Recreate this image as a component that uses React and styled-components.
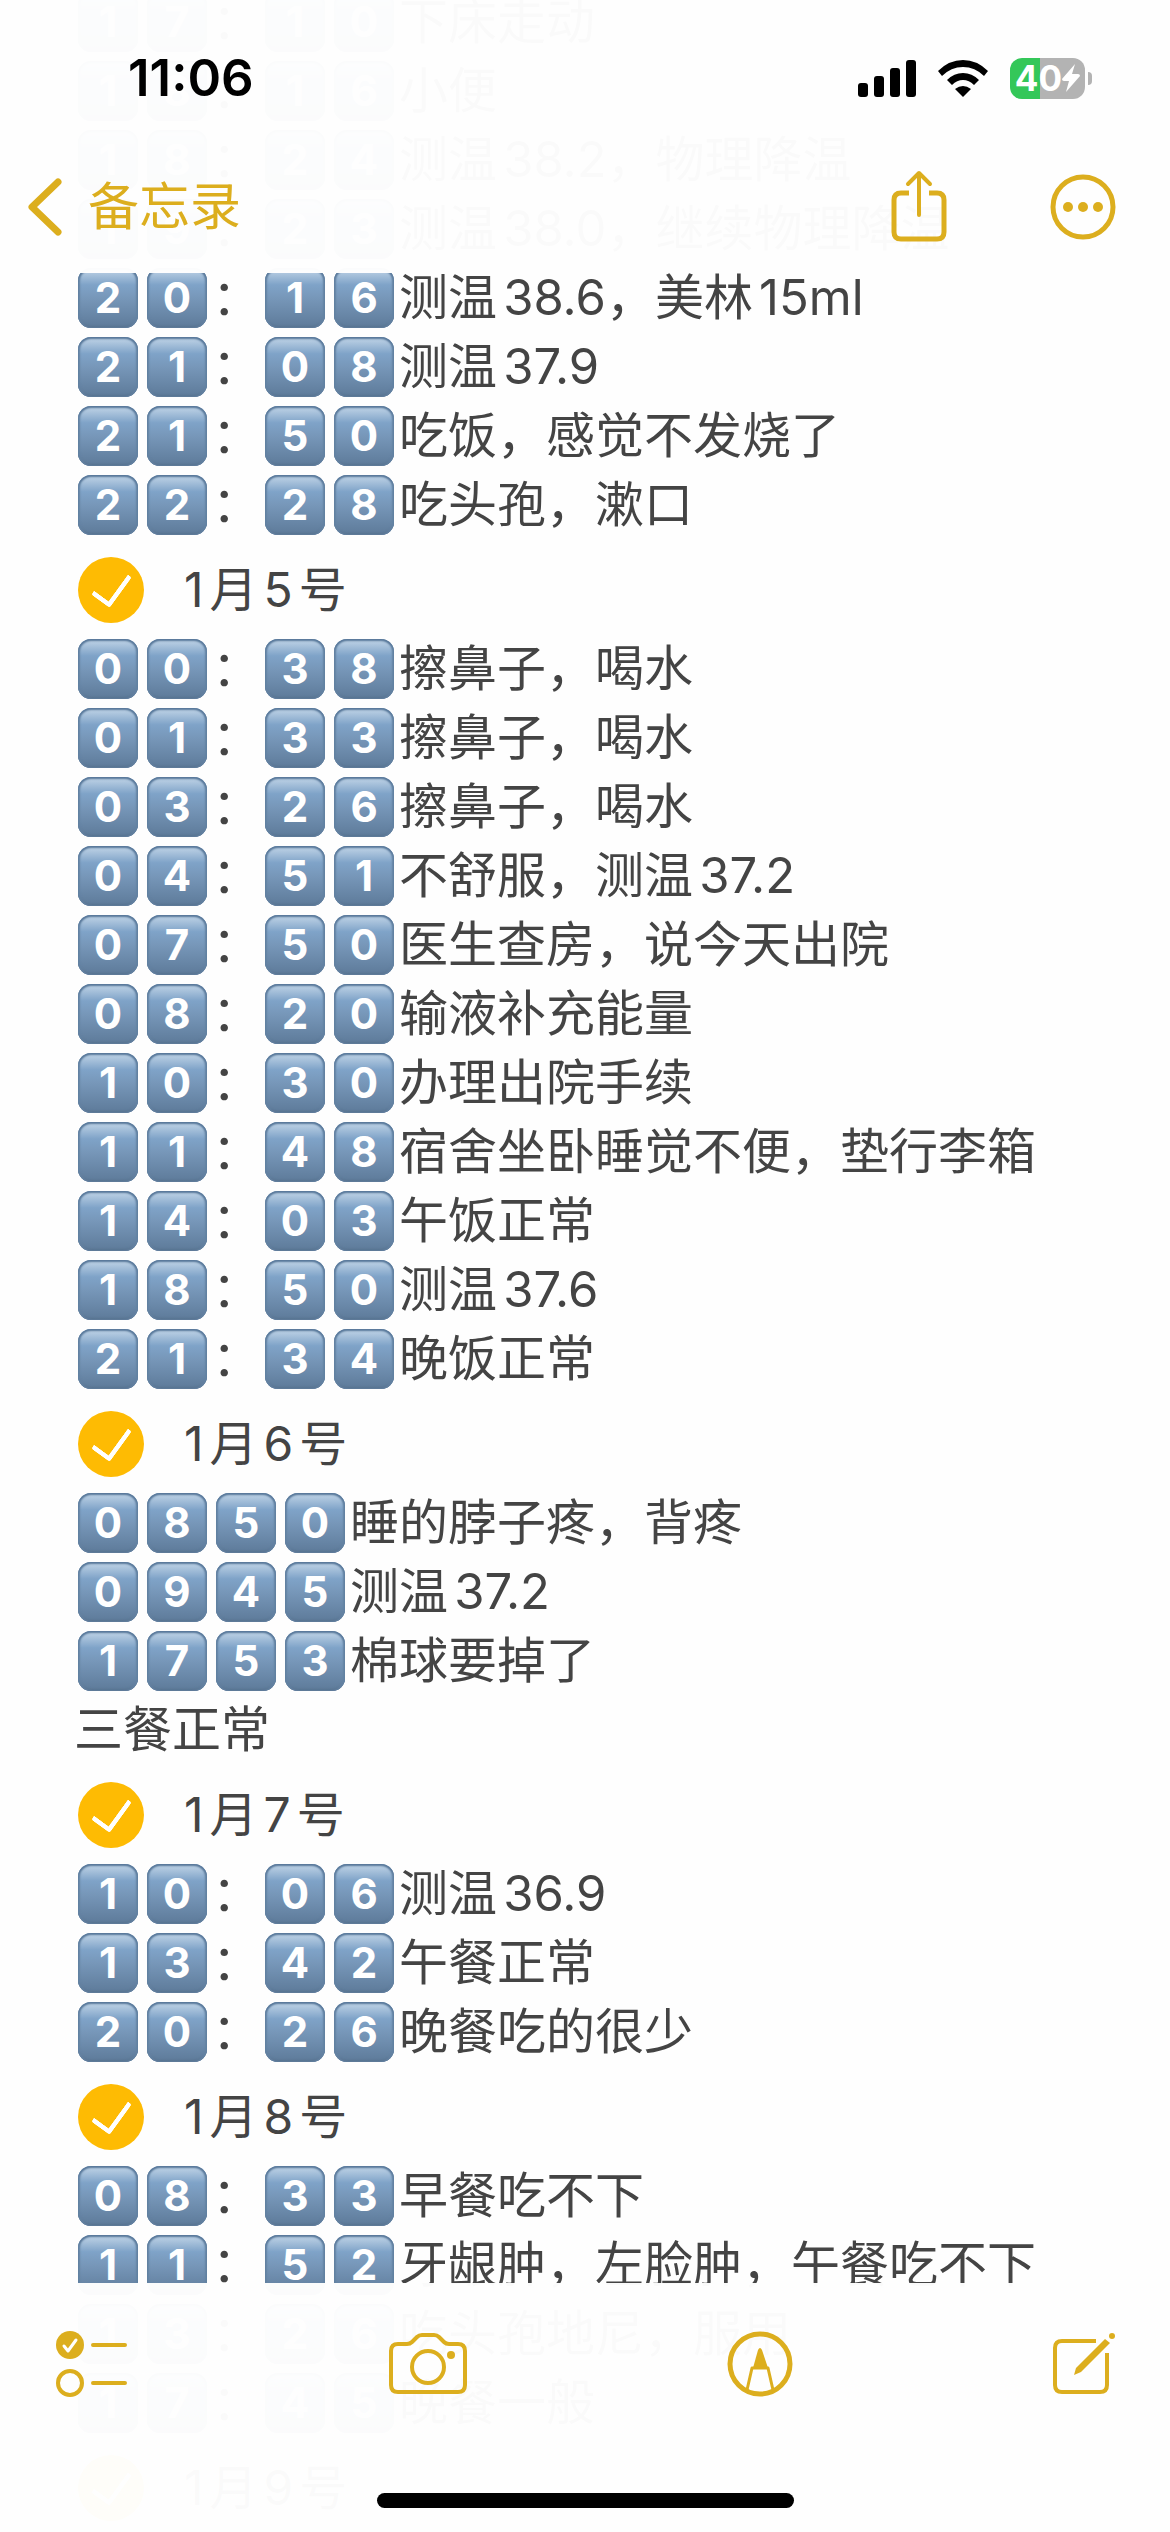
import React from 'react';
import styled, { createGlobalStyle } from 'styled-components';

const Global = createGlobalStyle`
  * { box-sizing: border-box; }
  body {
    margin: 0;
    background: #fefefe;
    color: #444444;
    font-family: Inter, "Noto Sans CJK SC", sans-serif;
  }
`;

const Screen = styled.div`
  position: relative;
  height: 100vh;
  overflow: hidden;
`;

const bar = `
  position: absolute;
  left: 0;
  right: 0;
  background: rgba(254, 254, 254, 0.98);
`;

const Header = styled.header`
  ${bar}
  top: 0;
  height: 273px;
`;

const StatusBar = styled.div`
  display: flex;
  justify-content: space-between;
  align-items: center;
  height: 114px;
  padding: 42px 78px 0 128px;
  color: #000;
`;

const Clock = styled.time`
  font-size: 51px;
  line-height: 60px;
  font-weight: 600;
`;

const StatusIcons = styled.div`
  display: flex;
  align-items: center;
  gap: 22px;
`;

const Battery = styled.div`
  display: flex;
  align-items: center;
  gap: 3px;

  &::after {
    content: '';
    width: 4px;
    height: 13px;
    border-radius: 0 4px 4px 0;
    background: #b3b3b3;
  }
`;

const BatteryBody = styled.div`
  display: flex;
  align-items: center;
  justify-content: center;
  width: 75px;
  height: 41px;
  border-radius: 12px;
  background: linear-gradient(90deg, #34c759 40%, #b3b3b3 40%);
  color: #fff;
  font-size: 35px;
  line-height: 41px;
  font-weight: 700;
`;

const NavBar = styled.nav`
  display: flex;
  align-items: center;
  gap: 102px;
  height: 159px;
  padding: 27px 54px 0 28px;
`;

const BackLink = styled.a`
  display: flex;
  align-items: center;
  gap: 26px;
  margin-right: auto;
  color: #dcae1e;
  font-size: 51px;
  line-height: 70px;
  text-decoration: none;
`;

const IconButton = styled.button`
  display: flex;
  padding: 0;
  border: 0;
  background: none;
  color: #dcae1e;
`;

const Note = styled.main`
  margin-top: -13px;
  padding: 0 60px 0 74px;
  font-size: 49px;
  line-height: 69px;
  text-autospace: normal;
`;

const Line = styled.p`
  display: flex;
  align-items: center;
  height: 69px;
  margin: 0;
  white-space: nowrap;
`;

const Keycap = styled.span`
  flex: none;
  width: 60px;
  height: 60px;
  margin: 0 5px 0 4px;
  border-radius: 13px;
  background: linear-gradient(#c3d6e8 0, #7fa3c8 28%, #7797b9 50%, #5d7a99 100%);
  box-shadow: inset 0 2px 2px #58789a, inset 2px 0 2px #6685a5, inset -2px 0 2px #6685a5,
    inset 0 -2px 2px #58728f;
  color: #fff;
  font-size: 42px;
  line-height: 60px;
  font-weight: 700;
  text-align: center;
`;

const DayLabel = styled.label`
  display: flex;
  align-items: center;
  gap: 40px;
  padding: 18px 0 11px 4px;
  font-size: 48px;
  line-height: 66px;
`;

const DayCheck = styled.input`
  appearance: none;
  flex: none;
  width: 66px;
  height: 66px;
  margin: 0;
  border-radius: 50%;
  background: #febb03;

  &:checked {
    display: grid;
    place-items: center;
  }

  &:checked::after {
    content: '';
    width: 18px;
    height: 33px;
    margin-bottom: 8px;
    border: solid #fff;
    border-width: 0 5px 5px 0;
    border-radius: 3px;
    transform: rotate(36deg);
  }
`;

const Footer = styled.footer`
  ${bar}
  bottom: 0;
  height: 249px;
`;

const Toolbar = styled.div`
  display: flex;
  justify-content: space-between;
  align-items: center;
  height: 166px;
  padding: 0 54px 4px 55px;
`;

const HomeIndicator = styled.div`
  width: 417px;
  height: 15px;
  margin: 44px auto 0;
  border-radius: 8px;
  background: #000;
`;

const days = [
  {
    lines: [
      ['17:10', '下床走动'],
      ['18:16', '小便'],
      ['18:24', '测温38.2，物理降温'],
      ['19:23', '测温38.0，继续物理降温'],
      ['20:16', '测温38.6，美林15ml'],
      ['21:08', '测温37.9'],
      ['21:50', '吃饭，感觉不发烧了'],
      ['22:28', '吃头孢，漱口'],
    ],
  },
  {
    title: '1月5号',
    lines: [
      ['00:38', '擦鼻子，喝水'],
      ['01:33', '擦鼻子，喝水'],
      ['03:26', '擦鼻子，喝水'],
      ['04:51', '不舒服，测温37.2'],
      ['07:50', '医生查房，说今天出院'],
      ['08:20', '输液补充能量'],
      ['10:30', '办理出院手续'],
      ['11:48', '宿舍坐卧睡觉不便，垫行李箱'],
      ['14:03', '午饭正常'],
      ['18:50', '测温37.6'],
      ['21:34', '晚饭正常'],
    ],
  },
  {
    title: '1月6号',
    lines: [
      ['0850', '睡的脖子疼，背疼'],
      ['0945', '测温37.2'],
      ['1753', '棉球要掉了'],
      ['', '三餐正常'],
    ],
  },
  {
    title: '1月7号',
    lines: [
      ['10:06', '测温36.9'],
      ['13:42', '午餐正常'],
      ['20:26', '晚餐吃的很少'],
    ],
  },
  {
    title: '1月8号',
    lines: [
      ['08:33', '早餐吃不下'],
      ['11:52', '牙龈肿，左脸肿，午餐吃不下'],
      ['13:26', '吃头孢地尼，服用'],
      ['17:45', '晚餐一般'],
    ],
  },
  { title: '1月9号', lines: [] },
];

function Entry({ time, text }) {
  return (
    <Line>
      {[...time].map((c, i) =>
        c === ':' ? <span key={i}>：</span> : <Keycap key={i}>{c}</Keycap>
      )}
      <span>{text}</span>
    </Line>
  );
}

function Day({ title, lines }) {
  return (
    <section>
      {title && (
        <DayLabel>
          <DayCheck type="checkbox" defaultChecked />
          {title}
        </DayLabel>
      )}
      {lines.map(([time, text]) => (
        <Entry key={time + text} time={time} text={text} />
      ))}
    </section>
  );
}

const stroke = {
  fill: 'none',
  stroke: 'currentColor',
  strokeWidth: 4,
  strokeLinecap: 'round',
  strokeLinejoin: 'round',
};

const SignalIcon = () => (
  <svg width="58" height="37" viewBox="0 0 58 37">
    <rect x="0" y="23" width="10" height="14" rx="3" />
    <rect x="16" y="16" width="10" height="21" rx="3" />
    <rect x="32" y="8" width="10" height="29" rx="3" />
    <rect x="48" y="0" width="10" height="37" rx="3" />
  </svg>
);

const WifiIcon = () => (
  <svg width="50" height="37" viewBox="0 0 50 37">
    <path d="M0 11Q11 0 25 0T50 11L46 16Q37 7 25 7T4 16Z" />
    <path d="M9 20Q16 13 25 13T41 20L36 25Q31 20 25 20T14 25Z" />
    <path d="M17 29Q25 23 33 29L25 37Z" />
  </svg>
);

const BoltIcon = () => (
  <svg width="18" height="28" viewBox="0 0 18 28" fill="#fff">
    <path d="M13 0L0 15Q0 17 2 17H7L4 28L18 12Q18 10 16 10H10Z" />
  </svg>
);

const BackIcon = () => (
  <svg width="34" height="58" viewBox="0 0 34 58">
    <path d="M30 4L4 29L30 54" {...stroke} strokeWidth="7" />
  </svg>
);

const ShareIcon = () => (
  <svg width="58" height="74" viewBox="0 0 58 74">
    <g {...stroke} strokeWidth="5">
      <path d="M19 23H11Q4 23 4 30V62Q4 69 11 69H47Q54 69 54 62V30Q54 23 47 23H39" strokeLinecap="butt" />
      <path d="M29 45V4M18 14L29 3L40 14" strokeWidth="4" />
    </g>
  </svg>
);

const MoreIcon = () => (
  <svg width="66" height="66" viewBox="0 0 66 66" fill="currentColor">
    <circle cx="33" cy="33" r="30" {...stroke} strokeWidth="5" />
    <circle cx="18" cy="33" r="5" />
    <circle cx="33" cy="33" r="5" />
    <circle cx="48" cy="33" r="5" />
  </svg>
);

const ChecklistIcon = () => (
  <svg width="74" height="66" viewBox="0 0 74 66" fill="currentColor">
    <circle cx="15" cy="14" r="14" />
    <path d="M9 15L13 20L21 9" {...stroke} stroke="#fff" strokeWidth="3" />
    <circle cx="15" cy="52" r="12" {...stroke} />
    <path d="M38 14H70M38 52H70" {...stroke} />
  </svg>
);

const CameraIcon = () => (
  <svg width="80" height="62" viewBox="0 0 80 62" fill="currentColor">
    <g {...stroke}>
      <path d="M10 11H19Q22 11 24 9L29 4Q31 2 34 2H46Q49 2 51 4L56 9Q58 11 61 11H70Q77 11 77 18V52Q77 59 70 59H10Q3 59 3 52V18Q3 11 10 11Z" />
      <circle cx="40" cy="34" r="16" />
    </g>
    <circle cx="63" cy="22" r="4" />
  </svg>
);

const MarkupIcon = () => (
  <svg width="66" height="66" viewBox="0 0 66 66" fill="currentColor">
    <circle cx="33" cy="33" r="30" {...stroke} strokeWidth="5" />
    <path d="M20 59L25 37H41L46 59" {...stroke} strokeWidth="3" />
    <path d="M26 37L31 19Q33 15 35 19L41 37Z" />
  </svg>
);

const ComposeIcon = () => (
  <svg width="64" height="64" viewBox="0 0 64 64" fill="currentColor">
    <path d="M44 9H10Q3 9 3 16V53Q3 60 10 60H48Q55 60 55 53V21" {...stroke} strokeLinecap="butt" />
    <path d="M22 43L24 36L53 7L58 11L29 40Z" />
    <circle cx="60" cy="4" r="3" />
  </svg>
);

export default function App() {
  return (
    <Screen>
      <Global />
      <Note>
        {days.map((day, i) => (
          <Day key={i} {...day} />
        ))}
      </Note>
      <Header>
        <StatusBar>
          <Clock>11:06</Clock>
          <StatusIcons>
            <SignalIcon />
            <WifiIcon />
            <Battery>
              <BatteryBody>
                40
                <BoltIcon />
              </BatteryBody>
            </Battery>
          </StatusIcons>
        </StatusBar>
        <NavBar>
          <BackLink href="#notes">
            <BackIcon />
            备忘录
          </BackLink>
          <IconButton aria-label="共享"><ShareIcon /></IconButton>
          <IconButton aria-label="更多"><MoreIcon /></IconButton>
        </NavBar>
      </Header>
      <Footer>
        <Toolbar>
          <IconButton aria-label="核对清单"><ChecklistIcon /></IconButton>
          <IconButton aria-label="相机"><CameraIcon /></IconButton>
          <IconButton aria-label="标记"><MarkupIcon /></IconButton>
          <IconButton aria-label="新建备忘录"><ComposeIcon /></IconButton>
        </Toolbar>
        <HomeIndicator />
      </Footer>
    </Screen>
  );
}
